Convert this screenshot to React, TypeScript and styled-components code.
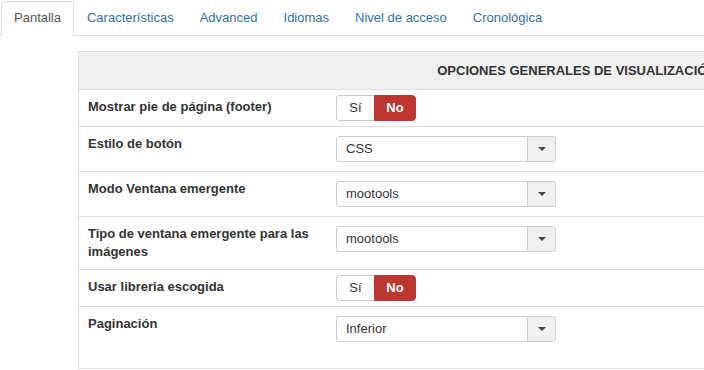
import React from "react";
import styled, { createGlobalStyle } from "styled-components";

const Global = createGlobalStyle`
  html, body { margin: 0; padding: 0; background: #fff; overflow: hidden; }
  body { font-family: "Liberation Sans", Arial, sans-serif; font-size: 13px; line-height: 18px; color: #333; }
  * { box-sizing: border-box; }
`;

const Page = styled.div`
  width: 704px;
  height: 370px;
  overflow: hidden;
`;

const TabBar = styled.ul`
  display: flex;
  list-style: none;
  margin: 1px 0 0 0;
  padding: 0 0 0 1px;
  border-bottom: 1px solid #ddd;
  width: 1200px;
`;

const Tab = styled.li<{ $active?: boolean }>`
  margin-bottom: -1px;
  padding: 7px 12px 8px;
  line-height: 18px;
  border: 1px solid ${(p) => (p.$active ? "#ddd" : "transparent")};
  border-bottom-color: ${(p) => (p.$active ? "#fff" : "transparent")};
  border-radius: 4px 4px 0 0;
  background: ${(p) => (p.$active ? "#fff" : "transparent")};
  color: ${(p) => (p.$active ? "#555" : "#3071a9")};
  white-space: nowrap;
`;

const Content = styled.div`
  padding: 15px 0 0 78px;
`;

const Panel = styled.div`
  width: 998px;
  border: 1px solid #ddd;
  padding-bottom: 17px;
`;

const PanelHeader = styled.div`
  height: 38px;
  background: #f0f0f0;
  border-bottom: 1px solid #ddd;
  display: flex;
  align-items: center;
  justify-content: center;
  font-weight: bold;
  text-transform: uppercase;
  color: #333;
  white-space: nowrap;
`;

const Row = styled.div<{ $last?: boolean }>`
  display: grid;
  grid-template-columns: 249px 1fr;
  border-bottom: ${(p) => (p.$last ? "none" : "1px solid #ddd")};
`;

const Label = styled.div`
  padding: 8px 8px 8px 9px;
  font-weight: bold;
  line-height: 18px;
`;

const ControlCell = styled.div<{ $kind: "toggle" | "select" }>`
  padding: ${(p) => (p.$kind === "toggle" ? "5px 8px" : "9px 8px")};
`;

const Toggle = styled.div`
  display: inline-flex;
  height: 26px;
`;

const ToggleBtn = styled.span<{ $on?: boolean; $w: number }>`
  display: flex;
  align-items: center;
  justify-content: center;
  width: ${(p) => p.$w}px;
  height: 26px;
  font-weight: ${(p) => (p.$on ? "bold" : "normal")};
  color: ${(p) => (p.$on ? "#fff" : "#333")};
  background: ${(p) => (p.$on ? "#bd362f" : "#fff")};
  border: 1px solid ${(p) => (p.$on ? "#bd362f" : "#ccc")};
  border-radius: ${(p) => (p.$on ? "0 4px 4px 0" : "4px 0 0 4px")};
  ${(p) => (p.$on ? "" : "border-right: none;")}
`;

const Select = styled.div`
  display: flex;
  width: 220px;
  height: 26px;
  border: 1px solid #ccc;
  border-radius: 3px;
  background: #fff;
`;

const SelectValue = styled.span`
  flex: 1;
  display: flex;
  align-items: center;
  padding-left: 9px;
  color: #333;
`;

const SelectArrow = styled.span`
  width: 28px;
  display: flex;
  align-items: center;
  justify-content: center;
  background: #f0f0f0;
  border-left: 1px solid #ccc;
  border-radius: 0 3px 3px 0;
`;

const Caret = () => (
  <svg width="8" height="4" viewBox="0 0 8 4">
    <path d="M0 0 L8 0 L4 4 Z" fill="#444" />
  </svg>
);

type Item =
  | { label: string; kind: "toggle" }
  | { label: string; kind: "select"; value: string };

const items: Item[] = [
  { label: "Mostrar pie de página (footer)", kind: "toggle" },
  { label: "Estilo de botón", kind: "select", value: "CSS" },
  { label: "Modo Ventana emergente", kind: "select", value: "mootools" },
  { label: "Tipo de ventana emergente para las imágenes", kind: "select", value: "mootools" },
  { label: "Usar libreria escogida", kind: "toggle" },
  { label: "Paginación", kind: "select", value: "Inferior" },
];

const tabs = ["Pantalla", "Características", "Advanced", "Idiomas", "Nivel de acceso", "Cronológica"];

export default function App() {
  return (
    <Page>
      <Global />
      <TabBar>
        {tabs.map((t, i) => (
          <Tab key={t} $active={i === 0}>
            {t}
          </Tab>
        ))}
      </TabBar>
      <Content>
        <Panel>
          <PanelHeader>Opciones generales de visualización</PanelHeader>
          {items.map((it, i) => (
            <Row key={i} $last={i === items.length - 1}>
              <Label>{it.label}</Label>
              <ControlCell $kind={it.kind}>
                {it.kind === "toggle" ? (
                  <Toggle>
                    <ToggleBtn $w={38}>Sí</ToggleBtn>
                    <ToggleBtn $w={42} $on>
                      No
                    </ToggleBtn>
                  </Toggle>
                ) : (
                  <Select>
                    <SelectValue>{it.value}</SelectValue>
                    <SelectArrow>
                      <Caret />
                    </SelectArrow>
                  </Select>
                )}
              </ControlCell>
            </Row>
          ))}
        </Panel>
      </Content>
    </Page>
  );
}
